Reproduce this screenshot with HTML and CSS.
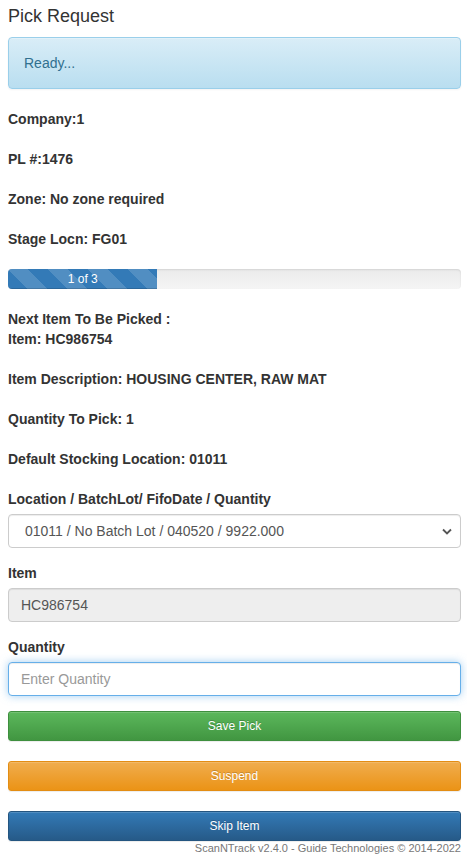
FILE: index.html
```html
<!DOCTYPE html>
<html lang="en">
<head>
    <meta charset="UTF-8">
    <meta name="viewport" content="width=device-width, initial-scale=1.0">
    <title>Pick Request</title>
    <link rel="stylesheet" href="styles.css">
</head>
<body>

    <div class="container">
        <h4 class="page-title">Pick Request</h4>

        <div class="alert alert-info">Ready...</div>

        <p class="info">Company:1</p>
        <p class="info">PL #:1476</p>
        <p class="info">Zone: No zone required</p>
        <p class="info">Stage Locn: FG01</p>

        <div class="progress">
            <div class="progress-bar" style="width: 33%;">1 of 3</div>
        </div>

        <p class="info">Next Item To Be Picked :<br>Item: HC986754</p>
        <p class="info">Item Description: HOUSING CENTER, RAW MAT</p>
        <p class="info">Quantity To Pick: 1</p>
        <p class="info">Default Stocking Location: 01011</p>

        <form id="pickForm">
            <div class="form-group">
                <label for="location">Location / BatchLot/ FifoDate / Quantity</label>
                <div class="select-wrap">
                    <select id="location" class="form-control">
                        <option>01011 / No Batch Lot / 040520 / 9922.000</option>
                    </select>
                    <svg class="chevron" width="10" height="7" viewBox="0 0 10 7">
                        <path d="M1 1.5 L5 5.5 L9 1.5" fill="none" stroke="#555" stroke-width="1.8"/>
                    </svg>
                </div>
            </div>

            <div class="form-group">
                <label for="item">Item</label>
                <input type="text" id="item" class="form-control" value="HC986754" readonly>
            </div>

            <div class="form-group">
                <label for="qty">Quantity</label>
                <input type="text" id="qty" class="form-control focused" placeholder="Enter Quantity">
            </div>

            <button type="button" class="btn btn-success">Save Pick</button>
            <button type="button" class="btn btn-warning">Suspend</button>
            <button type="button" class="btn btn-primary">Skip Item</button>
        </form>

        <div class="footer">ScanNTrack v2.4.0 - Guide Technologies &copy; 2014-2022</div>
    </div>

</body>
</html>
```
FILE: styles.css
```css
* {
    box-sizing: border-box;
}
body {
    margin: 0;
    font-family: "Liberation Sans", Arial, sans-serif;
    font-size: 14px;
    line-height: 20px;
    color: #333;
    background: #fff;
}
.container {
    padding: 0 6px 0 8px;
}
.page-title {
    font-size: 18px;
    font-weight: normal;
    line-height: 20px;
    margin: 6px 0 11px;
}
.alert {
    padding: 15px;
    border: 1px solid #9acfea;
    border-radius: 4px;
    margin-bottom: 20px;
}
.alert-info {
    color: #31708f;
    background: linear-gradient(to bottom, #d9edf7 0%, #b9def0 100%);
    box-shadow: inset 0 1px 0 rgba(255, 255, 255, 0.25), 0 1px 2px rgba(0, 0, 0, 0.05);
}
.info {
    font-weight: bold;
    margin: 0 0 20px;
}
.progress {
    height: 20px;
    margin-bottom: 20px;
    overflow: hidden;
    border-radius: 4px;
    background: linear-gradient(to bottom, #ebebeb 0%, #f5f5f5 100%);
    box-shadow: inset 0 1px 2px rgba(0, 0, 0, 0.1);
}
.progress-bar {
    height: 100%;
    font-size: 12px;
    line-height: 20px;
    color: #fff;
    text-align: center;
    background-color: #337ab7;
    background-image: linear-gradient(45deg, rgba(255, 255, 255, 0.15) 25%, transparent 25%, transparent 50%, rgba(255, 255, 255, 0.15) 50%, rgba(255, 255, 255, 0.15) 75%, transparent 75%, transparent);
    background-size: 40px 40px;
    box-shadow: inset 0 -1px 0 rgba(0, 0, 0, 0.15);
}
.form-group {
    margin-bottom: 15px;
}
label {
    display: inline-block;
    font-weight: bold;
    margin-bottom: 5px;
}
.form-control {
    display: block;
    width: 100%;
    height: 34px;
    padding: 6px 12px;
    font-family: inherit;
    font-size: 14px;
    line-height: 20px;
    color: #555;
    background: #fff;
    border: 1px solid #ccc;
    border-radius: 4px;
    box-shadow: inset 0 1px 1px rgba(0, 0, 0, 0.075);
    outline: none;
}
.select-wrap {
    position: relative;
}
select.form-control {
    appearance: none;
    -webkit-appearance: none;
    padding-left: 16px;
    padding-right: 30px;
}
.chevron {
    position: absolute;
    right: 9px;
    top: 14px;
    pointer-events: none;
}
.form-control[readonly] {
    background: #eee;
}
.form-control::placeholder {
    color: #999;
}
.form-control.focused {
    border-color: #66afe9;
    box-shadow: inset 0 1px 1px rgba(0, 0, 0, 0.075), 0 0 8px rgba(102, 175, 233, 0.6);
}
.btn {
    display: block;
    width: 100%;
    height: 30px;
    padding: 5px 10px;
    margin-bottom: 20px;
    font-family: inherit;
    font-size: 12px;
    line-height: 18px;
    color: #fff;
    border: 1px solid transparent;
    border-radius: 3px;
    text-shadow: 0 -1px 0 rgba(0, 0, 0, 0.2);
    box-shadow: inset 0 1px 0 rgba(255, 255, 255, 0.15), 0 1px 1px rgba(0, 0, 0, 0.075);
    cursor: pointer;
}
.btn-success {
    background: linear-gradient(to bottom, #5cb85c 0%, #419641 100%);
    border-color: #3e8f3e;
}
.btn-warning {
    background: linear-gradient(to bottom, #f0ad4e 0%, #eb9316 100%);
    border-color: #e38d13;
}
.btn-primary {
    background: linear-gradient(to bottom, #337ab7 0%, #265a88 100%);
    border-color: #245580;
    margin-bottom: 0;
}
.footer {
    text-align: right;
    font-size: 11px;
    line-height: 15px;
    color: #777;
}
```
